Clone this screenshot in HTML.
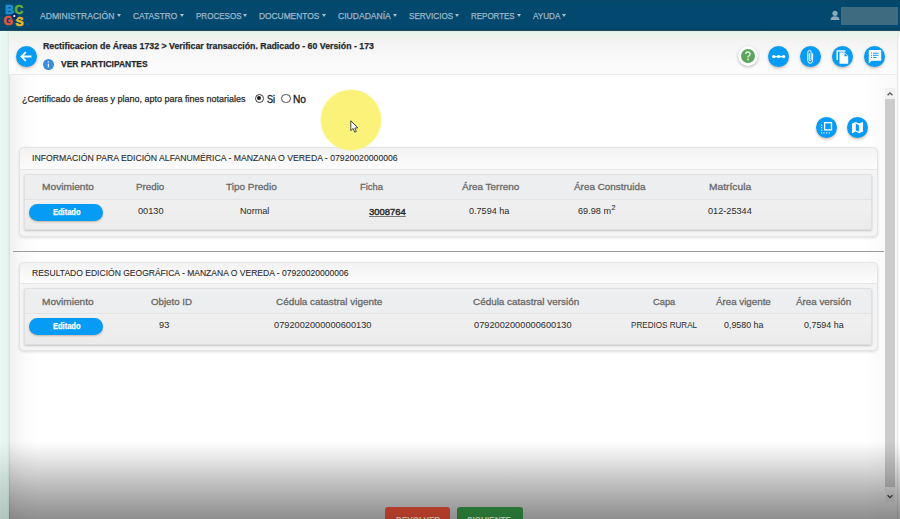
<!DOCTYPE html>
<html><head><meta charset="utf-8"><style>
*{box-sizing:border-box;margin:0;padding:0}
html,body{width:900px;height:519px;overflow:hidden}
body{position:relative;background:#fff;font-family:"Liberation Sans",sans-serif}
.a{position:absolute}
.t{position:absolute;white-space:pre;line-height:1.117;transform-origin:0 0;font-family:"Liberation Sans",sans-serif;-webkit-text-stroke:0.25px currentColor}
.caret{position:absolute;top:14px;width:0;height:0;border-left:2.9px solid transparent;border-right:2.9px solid transparent;border-top:3.1px solid #a9bfd1}
#nav{left:0;top:0;width:900px;height:31px;background:linear-gradient(#0a4566 0,#03486d 3px,#03496f 27px,#053f5e 30px,#3a6070 31px)}
#mintL{left:0;top:31px;width:8.5px;height:488px;background:linear-gradient(90deg,#eef8f4 0,#e4f7f0 1.5px,#e6f7f1 7px,#dfe9e5 8.5px)}
#mintT{left:0;top:31px;width:900px;height:6px;background:linear-gradient(#dfe8e2 0,#e8f4ec 1.5px,#ebf5ee 100%)}
#card{left:8.5px;top:36px;width:890px;height:483px;background:linear-gradient(90deg,#f1f1f1 0,#f7f7f7 8px,#fcfcfc 18px,#fff 28px,#fff 855px,#fafafa 875px);border-left:1px solid #dde2e0}
#chead{left:9px;top:36px;width:889px;height:38.5px;background:linear-gradient(180deg,#eef2ee 0,#f3f4f3 20%,#f7f7f7 45%,#fbfbfb 75%,#fcfcfc 100%);border-bottom:1px solid #ebebeb}
#rEdge{left:897px;top:36px;width:1.4px;height:483px;background:#e6e6e6}
.circ{position:absolute;border-radius:50%;background:#069cf6;box-shadow:0 1.5px 2.5px rgba(120,70,30,.35)}
.sec{position:absolute;left:18.5px;width:859.5px;border-radius:5px;background:#f4f4f4;border:1px solid #e4e4e4;box-shadow:0 1px 3px rgba(0,0,0,.13)}
.sech{position:absolute;left:0;top:0;right:0;height:21.5px;border-radius:5px 5px 0 0;background:linear-gradient(180deg,#f2f2f2 0,#f7f7f7 45%,#fcfcfc 100%);border-bottom:1px solid #e6e6e6}
.tbl{position:absolute;left:4px;right:4.7px;border:1px solid #e0e0e0;border-radius:2px;background:linear-gradient(180deg,#f2f2f2 0,#efefef 60%,#ebebeb 100%);box-shadow:0 1px 2px rgba(0,0,0,.2)}
.thr{position:absolute;left:0;right:0;top:0;height:25px;background:#eceeef;border-bottom:1px solid #e2e4e4}
.badge{position:absolute;left:29px;width:74px;height:16.5px;border-radius:9px;background:#069cf6;box-shadow:0 1px 2px rgba(120,70,30,.35);color:#fff;font-weight:700;font-size:8.2px;text-align:center;line-height:16.5px}
#hr{left:12.5px;top:250.6px;width:871.5px;height:1.5px;background:#9a9a9a}
#sb{left:885px;top:88px;width:10px;height:413.5px;background:#f1f1f1}
#thumb{left:885px;top:99px;width:10px;height:387.5px;background:#cbcbcb}
#yel{left:319.6px;top:89.1px;width:62.4px;height:62.4px;border-radius:50%;background:radial-gradient(circle closest-side,#fbf27a 0,#fbf27a 94%,rgba(251,242,122,.6) 98%,rgba(251,242,122,0) 100%)}
.btn{position:absolute;top:507.2px;height:20px;border-radius:3px;line-height:1}
.shade{position:absolute;left:8.5px;top:441px;width:891.5px;height:78px;background:linear-gradient(rgba(0,0,0,0) 0,rgba(0,0,0,.04) 10%,rgba(0,0,0,.19) 42%,rgba(0,0,0,.33) 72%,rgba(0,0,0,.445) 100%)}

.shade2{position:absolute;left:0;top:441px;width:8.5px;height:78px;background:linear-gradient(rgba(0,0,0,0) 0,rgba(40,60,55,.06) 22%,rgba(40,60,55,.16) 50%,rgba(40,60,55,.27) 100%)}

</style></head><body>
<div id="nav" class="a"></div>
<svg class="a" style="left:0;top:0" width="32" height="31" viewBox="0 0 32 31">
  <g font-family="Liberation Sans" font-weight="700" font-size="12" stroke-width="0.7">
  <text x="5.3" y="14.3" fill="#1f8fd8" stroke="#1f8fd8">B</text>
  <text x="14.6" y="14.3" fill="#6aaa3a" stroke="#6aaa3a">C</text>
  <text x="3.6" y="25.3" fill="#e0573b" stroke="#e0573b">G</text>
  <text x="15.6" y="25.6" fill="#e8b821" stroke="#e8b821">S</text>
  </g>
  <circle cx="14.6" cy="16.3" r="3.2" fill="#0a2a6a"/>
  <circle cx="14.3" cy="16" r="1.1" fill="#fff"/>
</svg>
<svg class="a" style="left:830px;top:10px" width="10" height="11" viewBox="0 0 10 11">
  <circle cx="5" cy="3.3" r="2.6" fill="#8fa9bd"/>
  <path d="M0.6 10 Q0.6 6.3 5 6.3 Q9.4 6.3 9.4 10 Z" fill="#8fa9bd"/>
</svg>
<div class="a" style="left:840.5px;top:7px;width:57px;height:17.7px;background:#3e6b80"></div>
<div id="mintT" class="a"></div>
<div id="mintL" class="a"></div>
<div id="card" class="a"></div>
<div id="chead" class="a"></div>
<div id="rEdge" class="a"></div>
<!-- back button -->
<div class="circ" style="left:16px;top:45.5px;width:21px;height:21px"></div>
<svg class="a" style="left:16px;top:45.5px" width="21" height="21" viewBox="0 0 21 21">
  <path d="M5.5 10.5 H15.5 M9.8 6.2 L5.5 10.5 L9.8 14.8" stroke="#fff" stroke-width="1.8" fill="none" stroke-linecap="butt"/>
</svg>
<!-- info icon -->
<div class="a" style="left:43.4px;top:58.9px;width:10.8px;height:10.8px;border-radius:50%;background:#3a8ddc"></div>
<svg class="a" style="left:43.4px;top:58.9px" width="11" height="11" viewBox="0 0 11 11">
  <rect x="4.75" y="4.7" width="1.3" height="3.6" fill="#e8f0fa"/><circle cx="5.4" cy="3.1" r="0.75" fill="#e8f0fa"/>
</svg>
<!-- header icons -->
<div class="a" style="left:737.6px;top:45.8px;width:20.6px;height:20.6px;border-radius:50%;background:#fff;box-shadow:0 1px 3px rgba(0,0,0,.28)"></div>
<div class="a" style="left:741.3px;top:49.1px;width:13.8px;height:13.8px;border-radius:50%;background:#5da55d"></div>
<svg class="a" style="left:741.3px;top:49.1px" width="13.8" height="13.8" viewBox="0 0 13.8 13.8">
  <path d="M4.7 5.1 Q4.7 3 6.9 3 Q9.1 3 9.1 5 Q9.1 6.1 7.9 6.8 Q7 7.4 7 8.4" stroke="#eaf5e6" stroke-width="1.35" fill="none"/>
  <circle cx="7" cy="10.4" r="0.9" fill="#eaf5e6"/>
</svg>
<div class="circ" style="left:768px;top:45.5px;width:21px;height:21px"></div>
<svg class="a" style="left:768px;top:45.5px" width="21" height="21" viewBox="0 0 21 21">
  <path d="M5.2 10.6 H16" stroke="#fff" stroke-width="1.3"/>
  <circle cx="5.8" cy="10.6" r="1.7" fill="#fff"/><circle cx="10.6" cy="10.6" r="1.7" fill="#fff"/><circle cx="15.6" cy="10.6" r="1.7" fill="#fff"/>
</svg>
<div class="circ" style="left:800.2px;top:45.5px;width:21px;height:21px"></div>
<svg class="a" style="left:800.2px;top:45.5px" width="21" height="21" viewBox="0 0 21 21">
  <path d="M12.6 7.2 V14.5 Q12.6 17.3 10.2 17.3 Q7.8 17.3 7.8 14.5 V6.5 Q7.8 4.4 9.5 4.4 Q11.2 4.4 11.2 6.5 V13.8 Q11.2 14.7 10.2 14.7 Q9.3 14.7 9.3 13.8 V7.2" stroke="#fff" stroke-width="1" fill="none"/>
</svg>
<div class="circ" style="left:832.2px;top:45.5px;width:21px;height:21px"></div>
<svg class="a" style="left:832.2px;top:45.5px" width="21" height="21" viewBox="0 0 21 21">
  <path d="M5.2 14 V5 H13.5" stroke="#fff" stroke-width="1.4" fill="none"/>
  <path d="M7.5 6.5 H12.8 L16.2 9.9 V17.7 H7.5 Z" fill="#fff"/>
  <path d="M12.5 7 V10.2 H15.7" fill="#069cf6"/>
</svg>
<div class="circ" style="left:863.8px;top:45.5px;width:21px;height:21px"></div>
<svg class="a" style="left:863.8px;top:45.5px" width="21" height="21" viewBox="0 0 21 21">
  <path d="M4.8 4 H17.2 V14.7 H7.6 L4.8 17.4 Z" fill="#fff"/>
  <rect x="7" y="6.7" width="1" height="1" fill="#069cf6"/><rect x="7" y="8.8" width="1" height="1" fill="#069cf6"/><rect x="7" y="10.9" width="1" height="1" fill="#069cf6"/>
  <rect x="9" y="6.7" width="5.5" height="1" fill="#069cf6"/><rect x="9" y="8.8" width="5.5" height="1" fill="#069cf6"/><rect x="9" y="10.9" width="3.5" height="1" fill="#069cf6"/>
</svg>
<!-- radios -->
<div class="a" style="left:254.8px;top:93.8px;width:9px;height:9px;border-radius:50%;border:1.2px solid #3a3a3a;background:#fff"></div>
<div class="a" style="left:257.3px;top:96.3px;width:4px;height:4px;border-radius:50%;background:#1e1e1e"></div>
<div class="a" style="left:281.4px;top:93.8px;width:9.2px;height:9.2px;border-radius:50%;border:1.1px solid #4a4a4a;background:#fff"></div>
<!-- small icon buttons -->
<div class="circ" style="left:815.7px;top:117.3px;width:21px;height:21px"></div>
<svg class="a" style="left:815.7px;top:117.3px" width="21" height="21" viewBox="0 0 21 21">
  <rect x="8.6" y="5.7" width="6.9" height="7.2" fill="none" stroke="#fff" stroke-width="1.3"/>
  <g fill="#fff"><circle cx="5.6" cy="8.2" r="0.65"/><circle cx="5.6" cy="10.7" r="0.65"/><circle cx="5.6" cy="13.2" r="0.65"/><circle cx="5.6" cy="15.9" r="0.65"/>
  <circle cx="8" cy="15.9" r="0.65"/><circle cx="10.7" cy="15.9" r="0.65"/><circle cx="13.4" cy="15.9" r="0.65"/></g>
</svg>
<div class="circ" style="left:846.5px;top:117.3px;width:21px;height:21px"></div>
<svg class="a" style="left:846.5px;top:117.3px" width="21" height="21" viewBox="0 0 21 21">
  <path d="M5 6.6 L8.7 5 L12.3 6.6 L16 5 V14.6 L12.3 16.2 L8.7 14.6 L5 16.2 Z" fill="#fff"/>
  <path d="M8.8 6.8 L11.9 7.9 V14.6 L8.8 13.5 Z" fill="#069cf6"/>
</svg>
<!-- scrollbar -->
<div id="sb" class="a"></div>
<div id="thumb" class="a"></div>
<svg class="a" style="left:885px;top:88px" width="10" height="11" viewBox="0 0 10 11"><path d="M2.6 7.2 L5 4.8 L7.4 7.2" stroke="#555" stroke-width="1.3" fill="none"/></svg>
<svg class="a" style="left:885px;top:490px" width="10" height="11" viewBox="0 0 10 11"><path d="M2.6 5.2 L5 7.6 L7.4 5.2" stroke="#444" stroke-width="1.3" fill="none"/></svg>
<!-- section 1 -->
<div class="sec" style="top:147px;height:90px">
  <div class="sech"></div>
  <div class="tbl" style="top:26.3px;height:56px"><div class="thr"></div></div>
</div>
<div id="hr" class="a"></div>
<!-- section 2 -->
<div class="sec" style="top:261.7px;height:89.5px">
  <div class="sech"></div>
  <div class="tbl" style="top:25.8px;height:56.5px"><div class="thr"></div></div>
</div>
<div class="badge" style="top:204.3px"></div>
<div class="badge" style="top:318.3px"></div>
<div class="t" style="left:611.4px;top:203.6px;font-size:7.2px;color:#333;-webkit-text-stroke:0.1px #333">2</div>

<div class="caret" style="left:116.6px"></div>
<div class="caret" style="left:180.3px"></div>
<div class="caret" style="left:242.7px"></div>
<div class="caret" style="left:321.5px"></div>
<div class="caret" style="left:392.7px"></div>
<div class="caret" style="left:454.9px"></div>
<div class="caret" style="left:516.7px"></div>
<div class="caret" style="left:562.3px"></div>
<div class="t" style="left:40.0px;top:11.07px;font-size:9.2px;font-weight:400;color:#9fb8cc;transform:scaleX(0.934);">ADMINISTRACIÓN</div>
<div class="t" style="left:132.7px;top:11.07px;font-size:9.2px;font-weight:400;color:#9fb8cc;transform:scaleX(0.910);">CATASTRO</div>
<div class="t" style="left:195.6px;top:11.07px;font-size:9.2px;font-weight:400;color:#9fb8cc;transform:scaleX(0.874);">PROCESOS</div>
<div class="t" style="left:259.3px;top:11.07px;font-size:9.2px;font-weight:400;color:#9fb8cc;transform:scaleX(0.911);">DOCUMENTOS</div>
<div class="t" style="left:337.7px;top:11.07px;font-size:9.2px;font-weight:400;color:#9fb8cc;transform:scaleX(0.932);">CIUDADANÍA</div>
<div class="t" style="left:408.5px;top:11.07px;font-size:9.2px;font-weight:400;color:#9fb8cc;transform:scaleX(0.886);">SERVICIOS</div>
<div class="t" style="left:471.0px;top:11.07px;font-size:9.2px;font-weight:400;color:#9fb8cc;transform:scaleX(0.867);">REPORTES</div>
<div class="t" style="left:532.8px;top:11.07px;font-size:9.2px;font-weight:400;color:#9fb8cc;transform:scaleX(0.884);">AYUDA</div>
<div class="t" style="left:42.6px;top:41.49px;font-size:9.4px;font-weight:700;color:#262a2e;transform:scaleX(0.936);">Rectificacion de Áreas 1732 &gt; Verificar transacción. Radicado - 60 Versión - 173</div>
<div class="t" style="left:61.0px;top:58.86px;font-size:9.1px;font-weight:700;color:#262a2e;transform:scaleX(0.930);">VER PARTICIPANTES</div>
<div class="t" style="left:21.7px;top:94.28px;font-size:9.3px;font-weight:400;color:#2a2a2a;transform:scaleX(0.967);">¿Certificado de áreas y plano, apto para fines notariales</div>
<div class="t" style="left:266.7px;top:93.58px;font-size:10.3px;font-weight:400;color:#262626;transform:scaleX(0.885);-webkit-text-stroke:0.35px currentColor;">Si</div>
<div class="t" style="left:292.9px;top:93.58px;font-size:10.3px;font-weight:400;color:#262626;transform:scaleX(0.987);-webkit-text-stroke:0.35px currentColor;">No</div>
<div class="t" style="left:52.5px;top:208.09px;font-size:8.3px;font-weight:700;color:#fff;transform:scaleX(0.904);">Editado</div>
<div class="t" style="left:52.5px;top:322.09px;font-size:8.3px;font-weight:700;color:#fff;transform:scaleX(0.904);">Editado</div>
<div class="t" style="left:32.1px;top:153.20px;font-size:9.5px;font-weight:400;color:#2a2a2a;transform:scaleX(0.913);-webkit-text-stroke:0.1px currentColor;">INFORMACIÓN PARA EDICIÓN ALFANUMÉRICA - MANZANA O VEREDA - 07920020000006</div>
<div class="t" style="left:32.0px;top:268.10px;font-size:9.5px;font-weight:400;color:#2a2a2a;transform:scaleX(0.898);-webkit-text-stroke:0.1px currentColor;">RESULTADO EDICIÓN GEOGRÁFICA - MANZANA O VEREDA - 07920020000006</div>
<div class="t" style="left:41.8px;top:182.03px;font-size:9.8px;font-weight:400;color:#6a6a6a;transform:scaleX(1.038);-webkit-text-stroke:0.3px currentColor;">Movimiento</div>
<div class="t" style="left:135.7px;top:182.03px;font-size:9.8px;font-weight:400;color:#6a6a6a;transform:scaleX(0.999);-webkit-text-stroke:0.3px currentColor;">Predio</div>
<div class="t" style="left:226.0px;top:182.03px;font-size:9.8px;font-weight:400;color:#6a6a6a;transform:scaleX(1.019);-webkit-text-stroke:0.3px currentColor;">Tipo Predio</div>
<div class="t" style="left:360.0px;top:182.03px;font-size:9.8px;font-weight:400;color:#6a6a6a;transform:scaleX(0.960);-webkit-text-stroke:0.3px currentColor;">Ficha</div>
<div class="t" style="left:461.7px;top:182.03px;font-size:9.8px;font-weight:400;color:#6a6a6a;transform:scaleX(1.015);-webkit-text-stroke:0.3px currentColor;">Área Terreno</div>
<div class="t" style="left:574.3px;top:182.03px;font-size:9.8px;font-weight:400;color:#6a6a6a;transform:scaleX(1.009);-webkit-text-stroke:0.3px currentColor;">Área Construida</div>
<div class="t" style="left:708.8px;top:182.03px;font-size:9.8px;font-weight:400;color:#6a6a6a;transform:scaleX(1.045);-webkit-text-stroke:0.3px currentColor;">Matrícula</div>
<div class="t" style="left:137.7px;top:205.81px;font-size:9.6px;font-weight:400;color:#303030;transform:scaleX(0.959);-webkit-text-stroke:0.05px currentColor;">00130</div>
<div class="t" style="left:240.0px;top:205.81px;font-size:9.6px;font-weight:400;color:#303030;transform:scaleX(0.948);-webkit-text-stroke:0.05px currentColor;">Normal</div>
<div class="t" style="left:469.0px;top:205.81px;font-size:9.6px;font-weight:400;color:#303030;transform:scaleX(0.944);-webkit-text-stroke:0.05px currentColor;">0.7594 ha</div>
<div class="t" style="left:707.6px;top:205.81px;font-size:9.6px;font-weight:400;color:#303030;transform:scaleX(0.954);-webkit-text-stroke:0.05px currentColor;">012-25344</div>
<div class="t" style="left:369.3px;top:207.13px;font-size:9.8px;font-weight:400;color:#2e2e2e;transform:scaleX(0.962);text-decoration:underline;text-decoration-color:#777;-webkit-text-stroke:0.45px currentColor;">3008764</div>
<div class="t" style="left:578.0px;top:205.51px;font-size:9.6px;font-weight:400;color:#303030;transform:scaleX(0.952);-webkit-text-stroke:0.05px currentColor;">69.98 m</div>
<div class="t" style="left:41.7px;top:296.53px;font-size:9.8px;font-weight:400;color:#6a6a6a;transform:scaleX(1.030);-webkit-text-stroke:0.3px currentColor;">Movimiento</div>
<div class="t" style="left:150.7px;top:296.53px;font-size:9.8px;font-weight:400;color:#6a6a6a;transform:scaleX(0.991);-webkit-text-stroke:0.3px currentColor;">Objeto ID</div>
<div class="t" style="left:276.0px;top:296.53px;font-size:9.8px;font-weight:400;color:#6a6a6a;transform:scaleX(1.010);-webkit-text-stroke:0.3px currentColor;">Cédula catastral vigente</div>
<div class="t" style="left:472.5px;top:296.53px;font-size:9.8px;font-weight:400;color:#6a6a6a;transform:scaleX(1.010);-webkit-text-stroke:0.3px currentColor;">Cédula catastral versión</div>
<div class="t" style="left:652.5px;top:296.53px;font-size:9.8px;font-weight:400;color:#6a6a6a;transform:scaleX(0.952);-webkit-text-stroke:0.3px currentColor;">Capa</div>
<div class="t" style="left:716.0px;top:296.53px;font-size:9.8px;font-weight:400;color:#6a6a6a;transform:scaleX(0.996);-webkit-text-stroke:0.3px currentColor;">Área vigente</div>
<div class="t" style="left:795.6px;top:296.53px;font-size:9.8px;font-weight:400;color:#6a6a6a;transform:scaleX(1.002);-webkit-text-stroke:0.3px currentColor;">Área versión</div>
<div class="t" style="left:159.0px;top:320.01px;font-size:9.6px;font-weight:400;color:#303030;transform:scaleX(0.965);-webkit-text-stroke:0.05px currentColor;">93</div>
<div class="t" style="left:274.0px;top:320.01px;font-size:9.6px;font-weight:400;color:#303030;transform:scaleX(0.961);-webkit-text-stroke:0.05px currentColor;">0792002000000600130</div>
<div class="t" style="left:474.4px;top:320.01px;font-size:9.6px;font-weight:400;color:#303030;transform:scaleX(0.963);-webkit-text-stroke:0.05px currentColor;">0792002000000600130</div>
<div class="t" style="left:630.6px;top:320.01px;font-size:9.6px;font-weight:400;color:#303030;transform:scaleX(0.843);-webkit-text-stroke:0.05px currentColor;">PREDIOS RURAL</div>
<div class="t" style="left:724.0px;top:320.01px;font-size:9.6px;font-weight:400;color:#303030;transform:scaleX(0.923);-webkit-text-stroke:0.05px currentColor;">0,9580 ha</div>
<div class="t" style="left:803.7px;top:320.01px;font-size:9.6px;font-weight:400;color:#303030;transform:scaleX(0.928);-webkit-text-stroke:0.05px currentColor;">0,7594 ha</div>
<div class="shade"></div><div class="shade2"></div>
<div id="yel" class="a"></div>
<svg class="a" style="left:350px;top:119.5px" width="10" height="14" viewBox="0 0 10 14">
  <path d="M0.8 0.8 V10.6 L3.1 8.5 L4.7 12.2 L6.3 11.5 L4.8 8 L7.9 7.8 Z" fill="#fff" stroke="#333" stroke-width="0.9" stroke-linejoin="round"/>
</svg>
<div class="btn" style="left:385px;width:65px;background:linear-gradient(#b03d29,#a53826)"><span style="position:absolute;left:10.8px;top:8px;font-size:9.4px;font-weight:700;color:#c9aaa3;transform:scaleX(0.87);transform-origin:0 0">DEVOLVER</span></div>
<div class="btn" style="left:457.3px;width:65.3px;background:linear-gradient(#2a7536,#256a31)"><span style="position:absolute;left:10px;top:8px;font-size:9.4px;font-weight:700;color:#a9c2ad;transform:scaleX(0.87);transform-origin:0 0">SIGUIENTE</span></div>

</body></html>
